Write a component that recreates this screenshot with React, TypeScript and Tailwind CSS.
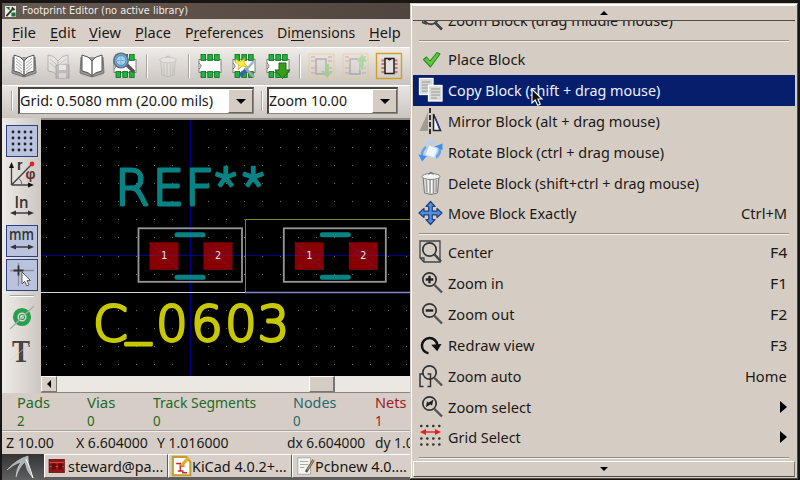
import { useLayoutEffect, useRef, useState, type ReactNode } from 'react';

/** Single line of text condensed or widened to an exact width. */
function Fit({ w, children, className = '' }: { w: number; children: ReactNode; className?: string }) {
  const ref = useRef<HTMLSpanElement>(null);
  const [scale, setScale] = useState(1);
  useLayoutEffect(() => {
    if (ref.current) setScale(w / ref.current.offsetWidth);
  }, [w]);
  return (
    <span className={'block shrink-0 whitespace-nowrap ' + className} style={{ width: w }}>
      <span ref={ref} className="inline-block origin-left whitespace-nowrap" style={{ transform: `scaleX(${scale})` }}>
        {children}
      </span>
    </span>
  );
}

function Icon({ children, className = 'size-6' }: { children: ReactNode; className?: string }) {
  return (
    <svg viewBox="0 0 24 24" className={'block shrink-0 overflow-visible ' + className} fill="none">
      {children}
    </svg>
  );
}

const Lens = ({ children }: { children?: ReactNode }) => (
  <>
    <path d="M15.5 14 L23 21.5" stroke="#555" strokeWidth="2.4" />
    <circle cx="10.5" cy="8.5" r="6.7" stroke="#343434" strokeWidth="1.7" />
    {children}
  </>
);

const Book = ({ lines }: { lines?: boolean }) => (
  <Icon className="h-6 w-[26px]">
    <path d="M0 20 L24 20 L21 23 H3 Z" fill="#bbb" opacity=".5" />
    <path d="M1 3 L0 19 L12 23 L24 19 L23 3" fill="#999" stroke="#666" strokeWidth=".8" />
    <path d="M2 1 Q9 2 12 7 Q15 2 22 1 V17 Q15 18 12 22 Q9 18 2 17 Z" fill="#fdfdfd" stroke="#555" strokeWidth="1" />
    <path d="M12 7 V22" stroke="#555" strokeWidth="1.3" />
    {lines && <path d="M4 4 L10 9 M4 7 L10 12 M4 10 L10 15 M4 13 L10 18 M20 4 L14 9 M20 7 L14 12 M20 10 L14 15 M20 13 L14 18" stroke="#aaa" />}
  </Icon>
);

const Trash = () => (
  <>
    <path d="M4 6 H20 L18.5 22 Q12 25 5.5 22 Z" fill="#d8d8d4" stroke="#777" />
    <path d="M7.5 9 L8 21 M11 9 V22 M14.5 9 V22 M17.5 9 L17 21" stroke="#999" strokeWidth="1.3" />
    <path d="M9 9 L9.5 21 M12.7 9 V22" stroke="#fff" />
    <ellipse cx="12" cy="5.5" rx="9" ry="3" fill="#f3f3f1" stroke="#808080" />
    <path d="M9.5 3.5 Q12 -1 14.5 3.5" stroke="#777" strokeWidth="1.2" />
  </>
);

const Chip = () => (
  <>
    <rect x="1" y="5.5" width="22" height="13" fill="#fff" stroke="#777" strokeWidth=".9" />
    <path d="M1 9 Q5 12 1 15" stroke="#777" />
    {[3, 9.8, 16.6].map((x) => (
      <g key={x} fill="#17b936" stroke="#176423" strokeWidth=".8">
        <rect x={x} y="0.5" width="4.6" height="6" />
        <rect x={x} y="17.5" width="4.6" height="6" />
      </g>
    ))}
  </>
);

const Module = () => (
  <>
    <rect x="0" y="0" width="25" height="25" stroke="#eccb6c" strokeWidth="1.2" />
    <rect x="7" y="5" width="10" height="15" stroke="#777" strokeWidth="1.3" />
    <path d="M2 3 H6 M2 7 H6 M2 14 H6 M2 19 H6 M19 3 H23 M19 7 H23 M19 14 H23 M19 19 H23" stroke="#e58b85" strokeWidth="1.6" />
  </>
);

const pointer = 'M0 0 V14 L3.2 11 L5.7 16.3 L8.3 15.2 L5.9 10 H10 Z';

const icons: Record<string, ReactNode> = {
  block: (
    <>
      <path d="M15.5 14 L23 21.5" stroke="#444" strokeWidth="2.6" />
      <circle cx="12" cy="9" r="7.3" stroke="#444" strokeWidth="2" />
      <path d="M3 14 L8 16" stroke="#444" strokeWidth="2" />
    </>
  ),
  place: <path d="M4.5 12.5 L7.5 10 L11 14 L18 5.5 L21 7 L11.5 20 Z" fill="#5dc838" stroke="#278a24" strokeWidth="1.1" strokeLinejoin="round" />,
  copy: (
    <>
      <rect x="0.5" y="0.5" width="13.5" height="16" fill="#d5d5d1" stroke="#f9f9f9" strokeWidth="1.3" />
      <path d="M3 4 H11 M3 7 H9 M3 10 H9 M3 13 H9" stroke="#999" strokeWidth="1.2" />
      <rect x="9.5" y="7.5" width="13.5" height="15.5" fill="#d9d9d6" stroke="#fff" strokeWidth="1.3" />
      <path d="M12 11 H21 M12 14 H21 M12 17 H21 M12 20 H18" stroke="#999" strokeWidth="1.2" />
    </>
  ),
  mirror: (
    <>
      <path d="M9 3 V22 H0.5 Z" fill="#a09b93" />
      <path d="M14.5 5 V21.5 H21.5 Z" fill="#f2f2ff" stroke="#222" strokeWidth="1.5" />
      <path d="M20.5 20 L16 8" stroke="#34349b" strokeWidth="1.2" />
      <path d="M11 -1 V25" stroke="#222" strokeWidth="1.8" strokeDasharray="5 2" />
    </>
  ),
  rotate: (
    <>
      <path d="M3 17 Q2 11 7 7" stroke="#5ea4f3" strokeWidth="2.6" />
      <path d="M-.5 14.5 L8 16 L3 21.5 Z" fill="#3f8eee" />
      <path d="M20.5 6 Q22.5 13 17 17.5" stroke="#5ea4f3" strokeWidth="2.6" />
      <path d="M15.5 6.5 L23.5 3.5 L23.5 10 Z" fill="#3f8eee" />
      <path d="M7 4 Q12 0 16 5" stroke="#b3d1f5" strokeWidth="3" />
      <path d="M10 5 L19 8.5 L15.5 18 L6 15 Z" fill="#eff6ff" stroke="#b9d4f5" />
    </>
  ),
  trash: <Trash />,
  move: (
    <path
      d="M11.5 .5 L16 5.5 H13.3 V10.2 H18 V7.5 L23 12 L18 16.5 V13.8 H13.3 V18.5 H16 L11.5 23.5 L7 18.5 H9.7 V13.8 H5 V16.5 L0 12 L5 7.5 V10.2 H9.7 V5.5 H7 Z"
      fill="#4c8fe6"
      stroke="#243f72"
      strokeWidth="1.2"
      strokeLinejoin="round"
    />
  ),
  center: (
    <>
      <path d="M1 1 H21 V22 H5 L1 18 Z M1 18 H5 V22" stroke="#444" strokeWidth="1.3" />
      <circle cx="10.5" cy="9.5" r="6.7" stroke="#333" strokeWidth="1.7" />
      <path d="M15 14 L22 21.5" stroke="#444" strokeWidth="2.5" />
    </>
  ),
  zoomin: (
    <Lens>
      <path d="M6.7 8.5 H14.3 M10.5 4.7 V12.3" stroke="#222" strokeWidth="2.3" />
    </Lens>
  ),
  zoomout: (
    <Lens>
      <path d="M6.7 8.5 H14.3" stroke="#222" strokeWidth="2.4" />
    </Lens>
  ),
  redraw: (
    <>
      <path d="M9.5 20.3 A7.7 7.7 0 1 1 18.3 12" stroke="#111" strokeWidth="2.5" />
      <path d="M12.2 11.8 L22.5 11 L18.2 18.2 Z" fill="#111" />
    </>
  ),
  auto: (
    <>
      <Lens />
      <path d="M4.5 10 H1 V22.5 H4.5 M8.5 10 H11.5 V22.5 H8.5" stroke="#333" strokeWidth="1.5" />
    </>
  ),
  select: (
    <Lens>
      <path d="M14.5 4.5 L13 10.5 L11.3 9.5 L6.8 12.3 L8 6.5 L9.7 7.5 Z" fill="#222" />
    </Lens>
  ),
  grid: (
    <>
      {[1, 13.5, 19.5].map((y) =>
        [2.3, 8.3, 14.3, 20.3].map((x) => <circle key={`${x}-${y}`} cx={x} cy={y} r="1.3" fill="#303030" />),
      )}
      <path d="M4 7 H19" stroke="#ee1c1c" strokeWidth="1.4" />
      <path d="M1 7 L7 4 V10 Z M22 7 L16 4 V10 Z" fill="#ee1c1c" />
    </>
  ),
};

type Entry = { icon: string; label: string; w: number; keys?: string; kw?: number; sub?: boolean; on?: boolean };
const blockItems: Entry[] = [
  { icon: 'place', label: 'Place Block', w: 77.5 },
  { icon: 'copy', label: 'Copy Block (shift + drag mouse)', w: 212.5, on: true },
  { icon: 'mirror', label: 'Mirror Block (alt + drag mouse)', w: 211.5 },
  { icon: 'rotate', label: 'Rotate Block (ctrl + drag mouse)', w: 216.5 },
  { icon: 'trash', label: 'Delete Block (shift+ctrl + drag mouse)', w: 251.5 },
  { icon: 'move', label: 'Move Block Exactly', w: 128.5, keys: 'Ctrl+M', kw: 46 },
];
const viewItems: Entry[] = [
  { icon: 'center', label: 'Center', w: 45, keys: 'F4', kw: 17 },
  { icon: 'zoomin', label: 'Zoom in', w: 56, keys: 'F1', kw: 17 },
  { icon: 'zoomout', label: 'Zoom out', w: 66, keys: 'F2', kw: 17 },
  { icon: 'redraw', label: 'Redraw view', w: 86, keys: 'F3', kw: 17 },
  { icon: 'auto', label: 'Zoom auto', w: 73.5, keys: 'Home', kw: 42 },
  { icon: 'select', label: 'Zoom select', w: 83, sub: true },
  { icon: 'grid', label: 'Grid Select', w: 73, sub: true },
];

function Item({ e }: { e: Entry }) {
  return (
    <div className={'flex h-[30.85px] items-center pr-2 pl-[6px] text-[15px] ' + (e.on ? 'bg-[#061e6c] text-[#eef1ff]' : 'text-[#1b1917]')}>
      <Icon>{icons[e.icon]}</Icon>
      <Fit w={e.w} className="ml-[5px] leading-5">{e.label}</Fit>
      <span className="grow" />
      {e.keys && <Fit w={e.kw ?? 17} className="leading-5">{e.keys}</Fit>}
      {e.sub && <span className="size-0 border-y-[6px] border-l-[7px] border-y-transparent border-l-black" />}
    </div>
  );
}

const Rule = ({ className = '' }: { className?: string }) => (
  <div className={'shrink-0 ' + className}>
    <div className="mx-[6px] h-[2px] border-t border-[#968d84] bg-[#f3f0eb]" />
  </div>
);

function ContextMenu() {
  return (
    <div className="absolute top-[3px] left-[410px] flex h-[476px] w-[388px] flex-col border border-t-[#d4ccc4] border-r-[#504942] border-b-[#504942] border-l-[#d4ccc4] bg-[#d5ccc4] shadow-[inset_1px_1px_#fff]">
      <div className="mx-[2px] mt-px flex h-4 shrink-0 items-center justify-center border-t border-b border-t-white border-b-[#514a44]">
        <span className="border-x-[4px] border-b-[4px] border-x-transparent border-b-black" />
      </div>
      <div className="mx-[2px] flex h-[440px] shrink-0 flex-col overflow-hidden">
        <div className="-mt-4 shrink-0">
          <Item e={{ icon: 'block', label: 'Zoom Block (drag middle mouse)', w: 225 }} />
        </div>
        <Rule className="h-2 pt-1" />
        {blockItems.map((e) => <Item key={e.label} e={e} />)}
        <Rule className="h-2 pt-1" />
        {viewItems.map((e) => <Item key={e.label} e={e} />)}
        <Rule className="h-2 pt-1" />
      </div>
      <div className="mx-[2px] flex h-4 shrink-0 items-center justify-center border border-white border-r-[#7c736b] border-b-[#514a44]">
        <span className="border-x-[4px] border-t-[4px] border-x-transparent border-t-black" />
      </div>
    </div>
  );
}

const menus: [string, string, string, number][] = [
  ['', 'F', 'ile', 24], ['', 'E', 'dit', 26], ['', 'V', 'iew', 32], ['', 'P', 'lace', 36],
  ['P', 'r', 'eferences', 79], ['Di', 'm', 'ensions', 78], ['', 'H', 'elp', 32],
];

function Combo({ text, w, className }: { text: string; w: number; className: string }) {
  return (
    <div className={'flex h-[27px] shrink-0 items-stretch border border-t-2 border-l-2 border-[#8d857d] border-t-[#4b4540] border-l-[#4b4540] bg-white ' + className}>
      <Fit w={w} className="text-[15px] leading-[23px]">{text}</Fit>
      <span className="grow" />
      <span className="flex w-[25px] items-center justify-center border border-white border-r-[#6b645d] border-b-[#6b645d] bg-[#d5ccc4]">
        <span className="border-x-[5px] border-t-[5px] border-x-transparent border-t-black" />
      </span>
    </div>
  );
}

const Divider = ({ className = '' }: { className?: string }) => <span className={'w-[2px] shrink-0 border-l border-[#aaa39c] bg-white ' + className} />;

function Toolbar() {
  return (
    <div className="flex h-[38px] shrink-0 items-center border-t border-white bg-linear-to-b from-[#eeebe8] to-[#c9c4bf] pb-[2px] pl-[9px]">
      <Book lines />
      <div className="ml-2 opacity-40">
        <Icon className="h-6 w-[26px]">
          <path d="M2 1 Q8 1 12 7 Q16 1 22 1 V17 Q16 17 12 22 Q8 17 2 17 Z M12 7 V22" fill="#eee" stroke="#777" />
          <path d="M4 5 L10 10 M4 9 L10 14 M20 5 L14 10 M20 9 L14 14" stroke="#999" />
          <rect x="10" y="11" width="13" height="13" fill="#999" stroke="#666" />
          <rect x="13" y="11" width="7" height="5" fill="#fff" />
          <rect x="13" y="19" width="7" height="5" fill="#ddd" />
        </Icon>
      </div>
      <div className="ml-2"><Book /></div>
      <Icon className="ml-2 size-6">
        <Chip />
        <path d="M14 11 L21 18" stroke="#555" strokeWidth="3.5" />
        <circle cx="8" cy="6.5" r="7.2" fill="#7aaed7" stroke="#62717c" strokeWidth="1.6" />
        <circle cx="8" cy="6.5" r="5" fill="#a8d0e9" stroke="#4d8cbd" />
        <path d="M8 2 V11 M4 6.5 H12" stroke="#7ab0d4" />
      </Icon>
      <Divider className="ml-[9px] h-6" />
      <Icon className="ml-2 h-[22px] w-6 opacity-25"><Trash /></Icon>
      <Divider className="ml-2 h-6" />
      <Icon className="ml-2 size-6"><Chip /></Icon>
      <Icon className="ml-[10px] size-6">
        <Chip />
        <path d="M4 5 L8 8 L13 4 L12 9 L16 13 L10 12 L6 16 L7 11 L3 8 Z" fill="#ffed38" stroke="#bba81b" strokeWidth=".7" />
        <path d="M8 22 L15 15" stroke="#3366a8" strokeWidth="4" />
        <path d="M15 15 L22 7" stroke="#a3b4c0" strokeWidth="2.5" />
        <path d="M13 14 L22 23" stroke="#9aa8b0" strokeWidth="2.6" />
      </Icon>
      <Icon className="ml-[10px] size-6">
        <Chip />
        <path d="M13 9 H20 V16 H24 L16.5 24.5 L9 16 H13 Z" fill="#3b9c1c" stroke="#1d6815" />
      </Icon>
      <Divider className="ml-[9px] h-6" />
      <Icon className="ml-2 size-6 opacity-50">
        <Module />
        <path d="M16 10 H20 V17 H24 L18 24 L12 17 H16 Z" fill="#79c463" />
      </Icon>
      <Icon className="ml-[10px] size-6 opacity-50">
        <Module />
        <path d="M17 16 H21 V8 H25 L19 0 L13 8 H17 Z" fill="#79d463" stroke="#eee" strokeWidth=".5" />
      </Icon>
      <Icon className="ml-[10px] size-6">
        <rect x="-.5" y="-.5" width="25" height="25" stroke="#d49e1e" strokeWidth="1.4" />
        <path d="M4.5 6.5 H8 M4.5 10 H8 M4.5 14 H8 M4.5 18 H8 M17 6.5 H20.5 M17 10 H20.5 M17 14 H20.5 M17 18 H20.5" stroke="#d2735c" strokeWidth="2" />
        <rect x="8" y="4.5" width="9" height="15" fill="#e4e1de" stroke="#222" strokeWidth="1.5" />
        <path d="M10.5 5 Q12.5 8 14.5 5" fill="#222" />
      </Icon>
    </div>
  );
}

const sel = 'flex h-[32px] w-8 shrink-0 items-center justify-center border border-[#2a4082] bg-[#b9c3de]';

function SideBar() {
  return (
    <div className="flex w-[39px] shrink-0 flex-col items-center bg-linear-to-r from-[#eeebe8] to-[#cdc7c2] pt-[7px]">
      <div className={sel}>
        <Icon>
          {[3, 9, 15, 21].map((y) => [3, 9, 15, 21].map((x) => <circle key={`${x}-${y}`} cx={x} cy={y} r="1.4" fill="#20222c" />))}
        </Icon>
      </div>
      <Icon className="mt-[5px] size-6">
        <path d="M1.5 23 V3 M1.5 23 H22 M1.5 23 L21 3" stroke="#444" strokeWidth="1.4" />
        <path d="M1.5 0 L4 6 H-1 Z M24 23 L18 20.5 V25.5 Z" fill="#111" />
        <path d="M8 16 Q12 18 12 23" stroke="#666" />
        <circle cx="22" cy="2" r="2.4" fill="#e82020" />
        <text x="7" y="8" className="fill-[#333] font-['Liberation_Sans'] text-[14px] font-bold">r</text>
        <text x="15.5" y="17" className="fill-[#5b3030] font-['Liberation_Sans'] text-[14px] font-bold">φ</text>
      </Icon>
      <Icon className="mt-[10px] size-6">
        <text x="4.5" y="11.5" textLength="14" lengthAdjust="spacingAndGlyphs" className="fill-[#333] font-['Open_Sans'] text-[16px] font-semibold">In</text>
        <path d="M3 17 H21" stroke="#333" strokeWidth="1.4" />
        <path d="M0 17 L6 14.5 V19.5 Z M24 17 L18 14.5 V19.5 Z" fill="#333" />
      </Icon>
      <div className={'mt-[5px] ' + sel}>
        <Icon>
          <text x="-1" y="11" textLength="25" lengthAdjust="spacingAndGlyphs" className="fill-[#333] font-['Open_Sans'] text-[16px] font-semibold">mm</text>
          <path d="M3 18 H21" stroke="#333" strokeWidth="1.4" />
          <path d="M0 18 L6 15.5 V20.5 Z M24 18 L18 15.5 V20.5 Z" fill="#333" />
        </Icon>
      </div>
      <div className={'mt-[2px] ' + sel}>
        <Icon>
          <path d="M0 7.5 H24 M8.5 0 V23" stroke="#8d919d" strokeWidth="1.3" />
          <path d="M3.5 7.5 H13.5 M8.5 2.5 V12.5" stroke="#333" strokeWidth="1.8" />
          <path d={pointer} transform="translate(12 9) scale(.85)" fill="#fff" stroke="#444" />
        </Icon>
      </div>
      <div className="mt-[4px] h-[2px] w-6 shrink-0 border-t border-[#aaa39c] bg-white" />
      <Icon className="mt-[8px] size-6">
        <circle cx="12" cy="12" r="6.8" stroke="#24a04a" strokeWidth="4.6" />
        <circle cx="12" cy="12" r="2.5" stroke="#24a04a" strokeWidth="1.2" fill="#eee" />
        <path d="M0 24 L24 1" stroke="#aaa" strokeWidth="1.2" />
      </Icon>
      <Icon className="mt-[10px] size-6">
        <text x="2" y="23" textLength="18" lengthAdjust="spacingAndGlyphs" className="fill-[#444] font-['Liberation_Serif'] text-[31px] font-bold">T</text>
        <path d="M0 21 L24 2" stroke="#ccc" strokeWidth=".6" />
      </Icon>
    </div>
  );
}

function Footprint({ x, y, w }: { x: number; y: number; w: number }) {
  return (
    <g transform={`translate(${x} ${y})`}>
      <rect x="0" y="0" width={w} height="53.5" stroke="#979797" strokeWidth="1.8" fill="none" />
      <path d="M38.5 6.5 H64.5 M38.5 49 H64.5" stroke="#088282" strokeWidth="5" strokeLinecap="round" />
      {[11, 65].map((px, i) => (
        <g key={px}>
          <rect x={px} y="14" width="29" height="27.5" fill="#880004" />
          <path d={`M${px} 14 l29 27.5`} stroke="#74134f" strokeWidth="1" />
          <path d={`M${px} 27 h29`} stroke="#741044" strokeWidth="1" />
          <text x={px + 14.5} y="31" textAnchor="middle" className="fill-[#e6e6e6] font-['DejaVu_Sans_Mono'] text-[10px]">{i + 1}</text>
        </g>
      ))}
    </g>
  );
}

function Canvas() {
  const cols = Array.from({ length: 21 }, (_, i) => 46.3 + i * 17.97);
  const rows = Array.from({ length: 14 }, (_, i) => 129 + i * 18.08);
  return (
    <svg viewBox="41 120 369 256" className="block h-[256px] w-[369px] bg-black">
      {rows.map((y) => cols.map((x) => <rect key={`${x}-${y}`} x={Math.round(x)} y={Math.round(y)} width="1" height="1" fill="#6d6d6d" />))}
      <path d="M190.5 120 V376 M41 255.5 H410" stroke="#00008c" strokeWidth="1.1" />
      <path d="M410 219.5 H245.5 V292" stroke="#85851a" fill="none" />
      <path d="M41 292.5 H245" stroke="#d5d5d5" />
      <path d="M245 292.5 H410" stroke="#8585ca" strokeWidth="1.3" />
      <Footprint x={138.5} y={228.3} w={103.5} />
      <Footprint x={283.8} y={228.3} w={102} />
      <g strokeWidth="2.8" strokeLinejoin="round" className="font-['DejaVu_Sans'] text-[50px] font-extralight">
        <text y="204.5" className="fill-[#088282] stroke-[#088282]">
          <tspan x="115 152.5 185">REF</tspan>
          <tspan x="215.5 243" dy="-4" strokeWidth="2.4" className="font-['Roboto'] text-[48px] font-light">**</tspan>
        </text>
        <text y="340.5" className="fill-[#c8c800] stroke-[#c8c800]">
          <tspan x="93">C</tspan>
          <tspan x="126" dy="-8">_</tspan>
          <tspan x="156 191 225 257.5" dy="8">0603</tspan>
        </text>
      </g>
    </svg>
  );
}

const stats = [
  { label: 'Pads', lw: 33, value: '2', cell: 'w-[70px] text-[#236a27]' },
  { label: 'Vias', lw: 28, value: '0', cell: 'w-[66px] text-[#236a27]' },
  { label: 'Track Segments', lw: 103, value: '0', cell: 'w-[140px] text-[#236a27]' },
  { label: 'Nodes', lw: 43, value: '0', cell: 'w-[82px] text-[#22696b]' },
  { label: 'Nets', lw: 31, value: '1', cell: 'w-[35px] text-[#a11c25]' },
];

const task = 'flex h-[24px] shrink-0 items-center overflow-hidden border border-t-white border-l-white border-r-[#635c56] border-b-[#635c56] bg-[#d8d0c8] text-[15px] text-[#181614]';

export default function App() {
  return (
    <div className="relative h-[480px] w-[800px] overflow-hidden bg-[#181615] font-['Noto_Sans','Open_Sans',sans-serif] text-[#1b1917]">
      <div className="ml-[2px] flex h-[480px] w-[408px] flex-col overflow-hidden pt-[3px]">
        <div className="flex h-4 shrink-0 items-center bg-linear-to-r from-[#665950] to-[#51463f] pl-[3px] text-[10px] text-[#f0ece8]">
          <Icon className="size-[11px]">
            <rect width="24" height="24" fill="#e2eee2" />
            <path d="M2 2 H10 V10 Z M14 14 H23 V23 H14 Z" fill="#1d7036" />
            <path d="M3 22 L18 5 M15 3 L21 9" stroke="#333" strokeWidth="4" />
          </Icon>
          <Fit w={166} className="ml-[6px] font-['DejaVu_Sans'] leading-4">Footprint Editor (no active library)</Fit>
        </div>
        <div className="flex h-7 shrink-0 items-center bg-[#d8d0c8] pb-[2px] pl-[10px] text-[15px]">
          {menus.map(([a, b, c, w]) => (
            <Fit key={b} w={w} className="mr-[13.7px] leading-5">
              {a}<span className="underline decoration-1 underline-offset-2">{b}</span>{c}
            </Fit>
          ))}
        </div>
        <Toolbar />
        <div className="flex h-[33px] shrink-0 items-center border-t border-white bg-linear-to-b from-[#e8e4e1] to-[#cbc5c0] pb-[3px] pl-[9px]">
          <Divider className="h-5" />
          <Combo text="Grid: 0.5080 mm (20.00 mils)" w={193} className="ml-[5px] w-[236px]" />
          <Divider className="ml-[7px] h-5" />
          <Combo text="Zoom 10.00" w={78} className="ml-[4px] w-[131px]" />
        </div>
        <div className="flex h-[275px] shrink-0">
          <SideBar />
          <div className="flex w-[369px] flex-col">
            <div className="h-[2px] shrink-0 bg-[#8f8981]" />
            <Canvas />
            <div className="flex h-[17px] shrink-0 border-b border-[#8d857d] bg-[#ebe8e4]">
              <span className="flex w-4 items-center justify-center border border-white border-r-[#777] border-b-[#777] bg-[#d8d0c8]">
                <span className="border-y-[4px] border-r-[4px] border-y-transparent border-r-black" />
              </span>
              <span className="ml-[252px] w-[26px] border border-r-2 border-white border-r-[#777] border-b-[#777] bg-[#d5ccc4]" />
            </div>
          </div>
        </div>
        <div className="flex h-[38px] shrink-0 border-b border-[#a9a199] bg-[#d6cec6] pl-[15px] text-[15px]">
          {stats.map((s) => (
            <div key={s.label} className={'shrink-0 leading-[18px] ' + s.cell}>
              <Fit w={s.lw}>{s.label}</Fit>
              <Fit w={8}>{s.value}</Fit>
            </div>
          ))}
        </div>
        <div className="flex h-[23px] shrink-0 items-center border-t border-[#eee] bg-[#d6cec6] pb-[2px] pl-[4px] text-[15px]">
          <Fit w={48} className="mr-[22px] leading-5">Z 10.00</Fit>
          <Fit w={72} className="mr-[9px] leading-5">X 6.604000</Fit>
          <Fit w={71} className="mr-[59px] leading-5">Y 1.016000</Fit>
          <Fit w={78} className="mr-[10px] leading-5">dx 6.604000</Fit>
          <Fit w={78} className="leading-5">dy 1.016000</Fit>
        </div>
        <div className="flex h-[26px] shrink-0 bg-linear-to-b from-[#343434] to-[#606060]">
          <svg viewBox="0 0 42 25" className="h-[25px] w-[42px] shrink-0">
            <path d="M5 16 Q15 5 26 2 Q26 15 31 24 Q24 17 23 8 Q17 13 14 23 Q14 15 19 8 Q12 10 5 16Z" fill="#aeb4b6" stroke="#dfe5e6" strokeWidth=".5" />
            <path d="M24 5 Q28 13 31 24" fill="none" stroke="#fff" />
          </svg>
          <div className={'w-[124px] pl-1 ' + task}>
            <Icon className="size-4">
              <rect y="2" width="23" height="20" fill="#931518" stroke="#531012" />
              <path d="M1 7 H22 M1 13 H22" stroke="#dd4543" strokeWidth="2" />
              <path d="M4 8 H10 V17 H4Z M14 8 H20 V17 H14Z" fill="#5e0b0d" />
            </Icon>
            <Fit w={95} className="ml-[3px] leading-5">steward@pa...</Fit>
          </div>
          <div className={'w-[124px] pl-[3px] ' + task}>
            <Icon className="size-5">
              <path d="M1 1 H17 L22 7 V23 H1Z" fill="#fff" stroke="#c49b2e" strokeWidth="2.5" />
              <path d="M5 9 H10 V17 M10 12 H15 M7 18 H13 V20 H18" stroke="#c42d20" strokeWidth="1.7" />
              <path d="M11 12 L20 2" stroke="#ddae30" strokeWidth="4" />
            </Icon>
            <Fit w={95} className="leading-5">KiCad 4.0.2+...</Fit>
          </div>
          <div className={'w-[122px] pl-1 ' + task}>
            <Icon className="size-[18px]">
              <path d="M1 1 H18 V23 H1Z" fill="#f4f4f0" stroke="#999" />
              <path d="M4 6 H15 M4 10 H15 M4 14 H10" stroke="#aaa" strokeWidth="1.5" />
              <path d="M12 20 L22 4" stroke="#555" strokeWidth="3.5" />
              <path d="M14 17 L22 4" stroke="#c6a650" strokeWidth="1.5" />
            </Icon>
            <Fit w={92} className="leading-5">Pcbnew 4.0....</Fit>
          </div>
        </div>
      </div>
      <ContextMenu />
      <svg viewBox="0 0 12 18" className="absolute top-[89px] left-[531px] h-[18px] w-3 overflow-visible">
        <path d={pointer} transform="translate(1 0)" fill="#111" stroke="#fff" strokeWidth="1.1" />
      </svg>
    </div>
  );
}
